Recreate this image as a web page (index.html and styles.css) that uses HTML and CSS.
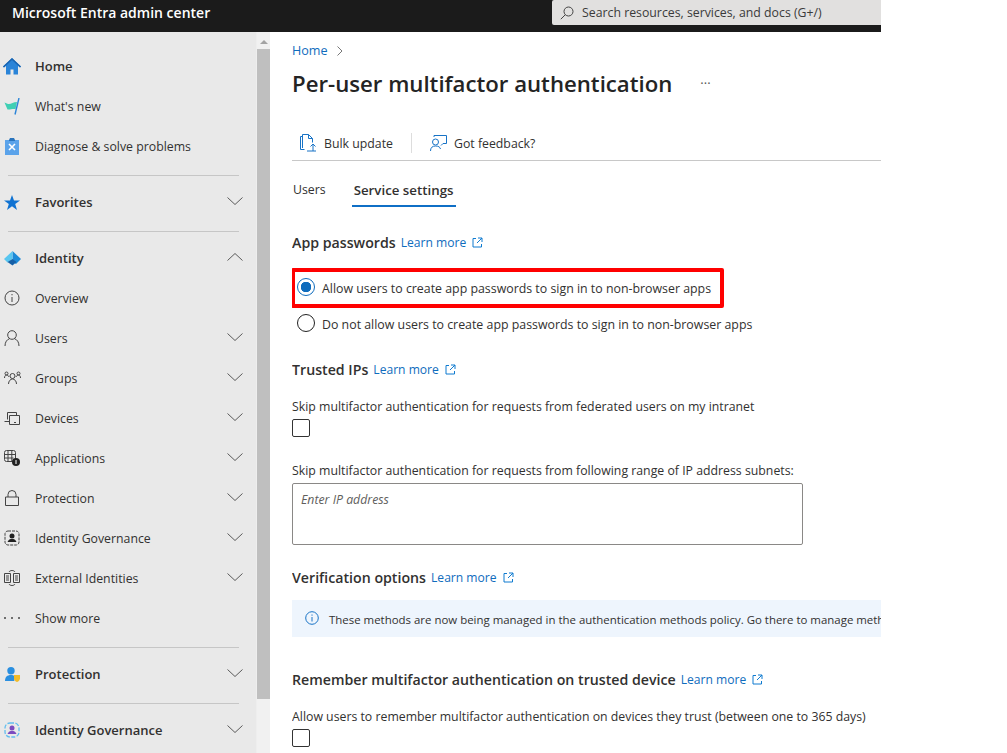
FILE: index.html
```html
<!DOCTYPE html>
<html lang="en">
<head>
<meta charset="utf-8">
<title>Per-user multifactor authentication</title>
<link rel="stylesheet" href="styles.css">
</head>
<body>
<svg class="defs" width="0" height="0" aria-hidden="true">
  <symbol id="chev" viewBox="0 0 16 8"><path d="M.5.5 8 7.500 15.500.5" fill="none" stroke="#5a5a5a" stroke-width="1"/></symbol>
  <symbol id="ext" viewBox="0 0 11 11"><path d="M4 1.500H1v8.500h8.500V7M6 1h4v4M10 1 5 6" fill="none" stroke="#0f7bd0" stroke-width="1"/></symbol>
</svg>
<div class="app">
  <header class="topbar">
    <div class="brand">Microsoft Entra admin center</div>
    <div class="search">
      <svg class="search-icon" width="14" height="14" viewBox="0 0 14 14"><circle cx="8.500" cy="5.500" r="4.500" fill="none" stroke="#444" stroke-width="1"/><path d="M5.300 8.700.8 13.200" stroke="#444" stroke-width="1"/></svg>
      <span>Search resources, services, and docs (G+/)</span>
    </div>
  </header>
  <div class="body">
    <nav class="sidebar">
      <div class="nav-list">
        <a class="row strong-soft"><span class="ic"><svg width="18" height="17" viewBox="0 0 18 17"><path d="M9 0 0 8.500l1 1L3 7.700V16.500h4.500v-5h3v5H15V7.700l2 1.800 1-1z" fill="#2a84d8"/><path d="M9 0 0 8.500l1 1L9 2l8 7.500 1-1z" fill="#1a64b0"/></svg></span><span class="lab">Home</span></a>
        <a class="row"><span class="ic"><svg width="16" height="17" viewBox="0 0 16 17"><path d="M.5 4.500 4 6c3 .5 5-2 9-2l-1.500 7C8 10.500 6 12 3.500 11.500z" fill="#3fcfb4"/><path d="M15 0 11 16.500" stroke="#2a84d8" stroke-width="1.400" fill="none"/></svg></span><span class="lab">What's new</span></a>
        <a class="row"><span class="ic"><svg width="14" height="17" viewBox="0 0 14 17"><path d="M0 2h14v15H0z" fill="#5ba3ea"/><path d="M4 2 5 0h4l1 2v1H4z" fill="#2a74bd"/><path d="m4 6 6 6M10 6l-6 6" stroke="#fff" stroke-width="1.600"/></svg></span><span class="lab">Diagnose &amp; solve problems</span></a>
      </div>
      <hr class="divider">
      <a class="row section"><span class="ic"><svg width="16" height="15" viewBox="0 0 16 15"><path d="m8 0 2 5.500h6L11.200 9l1.800 6-5-3.700L3 15l1.800-6L0 5.500h6z" fill="#0f72d2"/></svg></span><span class="lab">Favorites</span><svg class="chev"><use href="#chev"/></svg></a>
      <hr class="divider">
      <a class="row section"><span class="ic"><svg width="17" height="15" viewBox="0 0 17 15"><path d="M8.500 0 17 8l-5 5-3.500-2z" fill="#1c8ad8"/><path d="M8.500 0 0 8l3.500 3.500L8.500 8z" fill="#58c6f0"/><path d="M3.500 11 8.500 8l4 3-4 3.500z" fill="#1560a8"/></svg></span><span class="lab">Identity</span><svg class="chev up"><use href="#chev"/></svg></a>
      <a class="row"><span class="ic"><svg width="16" height="16" viewBox="0 0 16 16"><circle cx="8" cy="8" r="7" fill="none" stroke="#444"/><path d="M8 7v5M8 4v1.300" stroke="#444"/></svg></span><span class="lab">Overview</span></a>
      <a class="row"><span class="ic"><svg width="16" height="16" viewBox="0 0 16 16"><circle cx="8" cy="5" r="4.300" fill="none" stroke="#444"/><path d="M1 16c0-4 2-6.500 4.500-7.300M15 16c0-4-2-6.500-4.500-7.300" fill="none" stroke="#444"/></svg></span><span class="lab">Users</span><svg class="chev"><use href="#chev"/></svg></a>
      <a class="row"><span class="ic"><svg width="17" height="14" viewBox="0 0 17 14"><circle cx="8.500" cy="5" r="2.500" fill="none" stroke="#444"/><path d="M4.500 13c0-3 2-5 4-5s4 2 4 5" fill="none" stroke="#444"/><circle cx="2.500" cy="2.500" r="1.500" fill="none" stroke="#444"/><circle cx="14.500" cy="2.500" r="1.500" fill="none" stroke="#444"/><path d="M.5 7c0-2 1-3 2-3s2 .5 2.500 2M16.500 7c0-2-1-3-2-3s-2 .5-2.500 2" fill="none" stroke="#444"/></svg></span><span class="lab">Groups</span><svg class="chev"><use href="#chev"/></svg></a>
      <a class="row"><span class="ic"><svg width="16" height="13" viewBox="0 0 16 13"><path d="M3.500 7.500V.5h9V3M.5 9.500h5M5.500 3.500h10v9h-10z" fill="none" stroke="#444"/><path d="M10 10.500h2" stroke="#444"/></svg></span><span class="lab">Devices</span><svg class="chev"><use href="#chev"/></svg></a>
      <a class="row"><span class="ic"><svg width="16" height="16" viewBox="0 0 16 16"><path d="M.5 2.500a2 2 0 0 1 2-2h7a2 2 0 0 1 2 2v7M.5 2.500v7a2 2 0 0 0 2 2h6M.5 4.500h11M.5 8h9M4 .5v11M7.800.5v11" fill="none" stroke="#444"/><circle cx="12" cy="12" r="4" fill="#222"/><path d="M12 10v4" stroke="#fff"/></svg></span><span class="lab">Applications</span><svg class="chev"><use href="#chev"/></svg></a>
      <a class="row"><span class="ic"><svg width="14" height="16" viewBox="0 0 14 16"><path d="M3 7V4.500a4 4 0 0 1 8 0V7M.5 7h13v8.500H.5z" fill="none" stroke="#444"/></svg></span><span class="lab">Protection</span><svg class="chev"><use href="#chev"/></svg></a>
      <a class="row"><span class="ic"><svg width="16" height="16" viewBox="0 0 16 16"><rect x="1" y="1" width="14" height="14" rx="3" fill="none" stroke="#444" stroke-dasharray="3 1"/><circle cx="8" cy="6" r="2.500" fill="#222"/><path d="M3.500 12c1-2.500 2.500-3 4.500-3s3.500.5 4.500 3z" fill="#222"/></svg></span><span class="lab">Identity Governance</span><svg class="chev"><use href="#chev"/></svg></a>
      <a class="row"><span class="ic"><svg width="16" height="16" viewBox="0 0 16 16"><path d="M.5 3.500h6v9h-6zM9.500 3.500h6v9h-6zM2 6h3M2 8h3M2 10h3M11 6h3M11 8h3M11 10h3" fill="none" stroke="#444"/><path d="M5 2c1-2 5-2 6 0M5 14c1 2 5 2 6 0" fill="none" stroke="#444"/></svg></span><span class="lab">External Identities</span><svg class="chev"><use href="#chev"/></svg></a>
      <a class="row"><span class="ic"><span class="dots"><i></i><i></i><i></i></span></span><span class="lab">Show more</span></a>
      <hr class="divider">
      <a class="row section"><span class="ic"><svg width="15" height="15" viewBox="0 0 15 15"><circle cx="6" cy="3.800" r="3.700" fill="#2a8fe0"/><path d="M0 14c0-4 2-6 6-6 1.500 0 2.500.3 3.300 1v5z" fill="#2a8fe0"/><path d="M9 8h6v3.500c0 1.500-1.500 3-3 3.500-1.500-.5-3-2-3-3.500z" fill="#f2bc2a"/></svg></span><span class="lab">Protection</span><svg class="chev"><use href="#chev"/></svg></a>
      <hr class="divider">
      <a class="row section"><span class="ic"><svg width="16" height="16" viewBox="0 0 16 16"><rect x="1" y="1" width="14" height="14" rx="5" fill="none" stroke="#62bdee" stroke-width="1.300" stroke-dasharray="4 1.500"/><circle cx="8" cy="6" r="2.500" fill="#7b4cc0"/><path d="M3.500 12c1-2.500 2.500-3 4.500-3s3.500.5 4.500 3z" fill="#7b4cc0"/></svg></span><span class="lab">Identity Governance</span><svg class="chev"><use href="#chev"/></svg></a>
    </nav>
    <div class="scrollbar"><span class="arrow"></span><span class="thumb"></span></div>
    <main class="content">
      <div class="crumb"><a class="link">Home</a><svg width="6" height="10" viewBox="0 0 6 10"><path d="m.5.500 4.500 4.500L.5 9.500" fill="none" stroke="#777"/></svg></div>
      <div class="title-row"><h1>Per-user multifactor authentication</h1><span class="ellipsis">···</span></div>
      <div class="toolbar">
        <span class="tool"><svg width="17" height="18" viewBox="0 0 17 18"><path d="M2.500 2.500H.5v13h4M2.500 14V.5h6l4 4v4M8.500.5v4h4" fill="none" stroke="#1873c6"/><path d="M13 17V10M10.500 12.500 13 10l2.500 2.500M7 17h9" fill="none" stroke="#1873c6"/></svg>Bulk update</span>
        <span class="sep"></span>
        <span class="tool"><svg width="17" height="16" viewBox="0 0 17 16"><circle cx="5.500" cy="7" r="3" fill="none" stroke="#1873c6"/><path d="M.5 16c0-3.500 2-5 5-5s4.500 1 5 3" fill="none" stroke="#1873c6"/><path d="M4 2V.5h12.500v8H13L11 10.500" fill="none" stroke="#1873c6"/></svg>Got feedback?</span>
      </div>
      <div class="tabs"><span class="tab">Users</span><span class="tab active">Service settings</span></div>

      <div class="heading first"><b>App passwords</b><a class="link">Learn more</a><svg class="ext"><use href="#ext"/></svg></div>
      <div class="radio-box"><span class="radio on"></span><span class="txt">Allow users to create app passwords to sign in to non-browser apps</span></div>
      <div class="radio-row"><span class="radio"></span><span class="txt">Do not allow users to create app passwords to sign in to non-browser apps</span></div>

      <div class="heading trusted"><b>Trusted IPs</b><a class="link">Learn more</a><svg class="ext"><use href="#ext"/></svg></div>
      <p class="field-label skip">Skip multifactor authentication for requests from federated users on my intranet</p>
      <span class="check"></span>
      <p class="field-label range">Skip multifactor authentication for requests from following range of IP address subnets:</p>
      <div class="ip-box">Enter IP address</div>

      <div class="heading verify"><b>Verification options</b><a class="link">Learn more</a><svg class="ext"><use href="#ext"/></svg></div>
      <div class="banner"><svg width="14" height="14" viewBox="0 0 14 14"><circle cx="7" cy="7" r="6.300" fill="none" stroke="#1873c6"/><path d="M7 6v4.500M7 3.500v1.200" stroke="#1873c6"/></svg><span>These methods are now being managed in the authentication methods policy. Go there to manage methods for your users and groups.</span></div>

      <div class="heading remember"><b>Remember multifactor authentication on trusted device</b><a class="link">Learn more</a><svg class="ext"><use href="#ext"/></svg></div>
      <p class="field-label skip">Allow users to remember multifactor authentication on devices they trust (between one to 365 days)</p>
      <span class="check"></span>
    </main>
  </div>
</div>
</body>
</html>
```

FILE: styles.css
```css
* { box-sizing: border-box; }
html, body { margin: 0; height: 100%; overflow: hidden; background: #fff; }
body { font-family: "Open Sans", "Noto Sans", sans-serif; font-size: 12.3px; color: #323130; }
.defs { position: absolute; }
.app { width: 881px; height: 753px; display: flex; flex-direction: column; overflow: hidden; }
.topbar { height: 32px; flex: none; background: #1b1b1b; display: flex; justify-content: space-between; }
.brand { color: #fff; font-size: 14px; font-weight: 600; line-height: 26px; padding-left: 12px; }
.search { width: 329px; height: 25px; background: #e1e0df; border-radius: 2px 0 0 2px; display: flex; align-items: center; padding-left: 8px; color: #3a3a3a; }
.search-icon { margin-right: 8px; }
.body { flex: 1; display: flex; min-height: 0; }
.sidebar { width: 256px; flex: none; background: #e9e9e9; padding-top: 14px; }
.row { height: 40px; display: flex; align-items: center; }
.ic { width: 35px; flex: none; display: flex; justify-content: center; padding-right: 11px; }
.lab { flex: 1; }
.strong-soft .lab, .section .lab { font-weight: 600; font-size: 13px; }
.chev { width: 16px; height: 8px; margin-right: 13px; margin-top: -3px; }
.chev.up { transform: scaleY(-1); }
.divider { border: 0; border-top: 1px solid #c6c6c6; margin: 9px 17px 6px 8px; }
.dots { display: flex; gap: 5px; }
.dots i { width: 2px; height: 2px; background: #444; border-radius: 50%; }
.scrollbar { width: 14px; flex: none; background: #f1f1f1; margin-right: 22px; padding-top: 8px; border-left: 1px solid #eee; }
.arrow { display: block; width: 0; margin: 0 auto; border: 4px solid transparent; border-top: 0; border-bottom: 4px solid #a3a3a3; }
.thumb { display: block; height: 650px; background: #bfbfbf; margin-top: 5px; }
.content { flex: 1; min-width: 0; overflow: hidden; padding-top: 10px; }
.link { color: #0f6cbd; }
.crumb { display: flex; align-items: center; gap: 9px; height: 17px; }
.crumb .link { font-size: 12.6px; }
.title-row { display: flex; align-items: center; margin-top: 7px; height: 34px; }
h1 { font-size: 22.2px; font-weight: 600; margin: 0; color: #242424; }
.ellipsis { margin-left: 28px; color: #555; font-size: 13px; }
.toolbar { margin-top: 19px; height: 42px; border-bottom: 1px solid #c8c8c8; display: flex; align-items: center; padding: 7px 0 0 8px; }
.tool { display: flex; align-items: center; gap: 7px; }
.sep { width: 1px; height: 20px; background: #ddd; margin: 0 18px; }
.tabs { display: flex; height: 46px; }
.tab { height: 46px; line-height: 58px; margin: 0 26px 0 1px; }
.tab.active { font-weight: 600; font-size: 13.3px; border-bottom: 2px solid #0f6fc6; margin: 0; padding: 0 2px; line-height: 59px; }
.heading { display: flex; align-items: center; height: 20px; }
.heading b { font-size: 14.2px; font-weight: 600; margin-right: 5px; color: #323130; }
.heading .link { font-size: 12.1px; }
.ext { width: 11px; height: 11px; margin-left: 6px; }
.first { margin-top: 25px; }
.radio-box { width: 433px; height: 40px; margin: 16px 0 0 -1px; border: 4px solid #f00; border-radius: 2px; display: flex; align-items: center; padding-left: 2px; font-size: 12.36px; }
.radio-row { display: flex; align-items: center; height: 17px; margin-top: 8px; padding-left: 5px; font-size: 12.36px; }
.radio { width: 18px; height: 18px; border-radius: 50%; border: 1px solid #222; background: #fff; flex: none; margin-right: 7px; margin-top: -3px; }
.radio.on { border: 1px solid #0f6cbd; background: radial-gradient(circle, #0f6cbd 0 5px, #fff 5.500px); }
.trusted { margin-top: 26px; }
.field-label { margin: 0; line-height: 17px; }
.skip { margin-top: 19px; }
.check { display: block; width: 18px; height: 18px; margin-top: 4px; border: 1px solid #333; border-radius: 2px; }
.range { margin-top: 25px; }
.ip-box { width: 511px; height: 62px; margin-top: 4px; border: 1px solid #8a8886; border-radius: 2px; padding: 7px 9px 7px 8px; font-style: italic; color: #605e5c; }
.verify { margin-top: 22px; }
.banner { height: 37px; margin-top: 13px; padding: 1px 0 0 13px; background: #eef5fd; display: flex; align-items: center; gap: 10px; white-space: nowrap; overflow: hidden; font-size: 11.45px; }
.banner svg { flex: none; margin-top: -3px; }
.remember { margin-top: 32px; }
```
